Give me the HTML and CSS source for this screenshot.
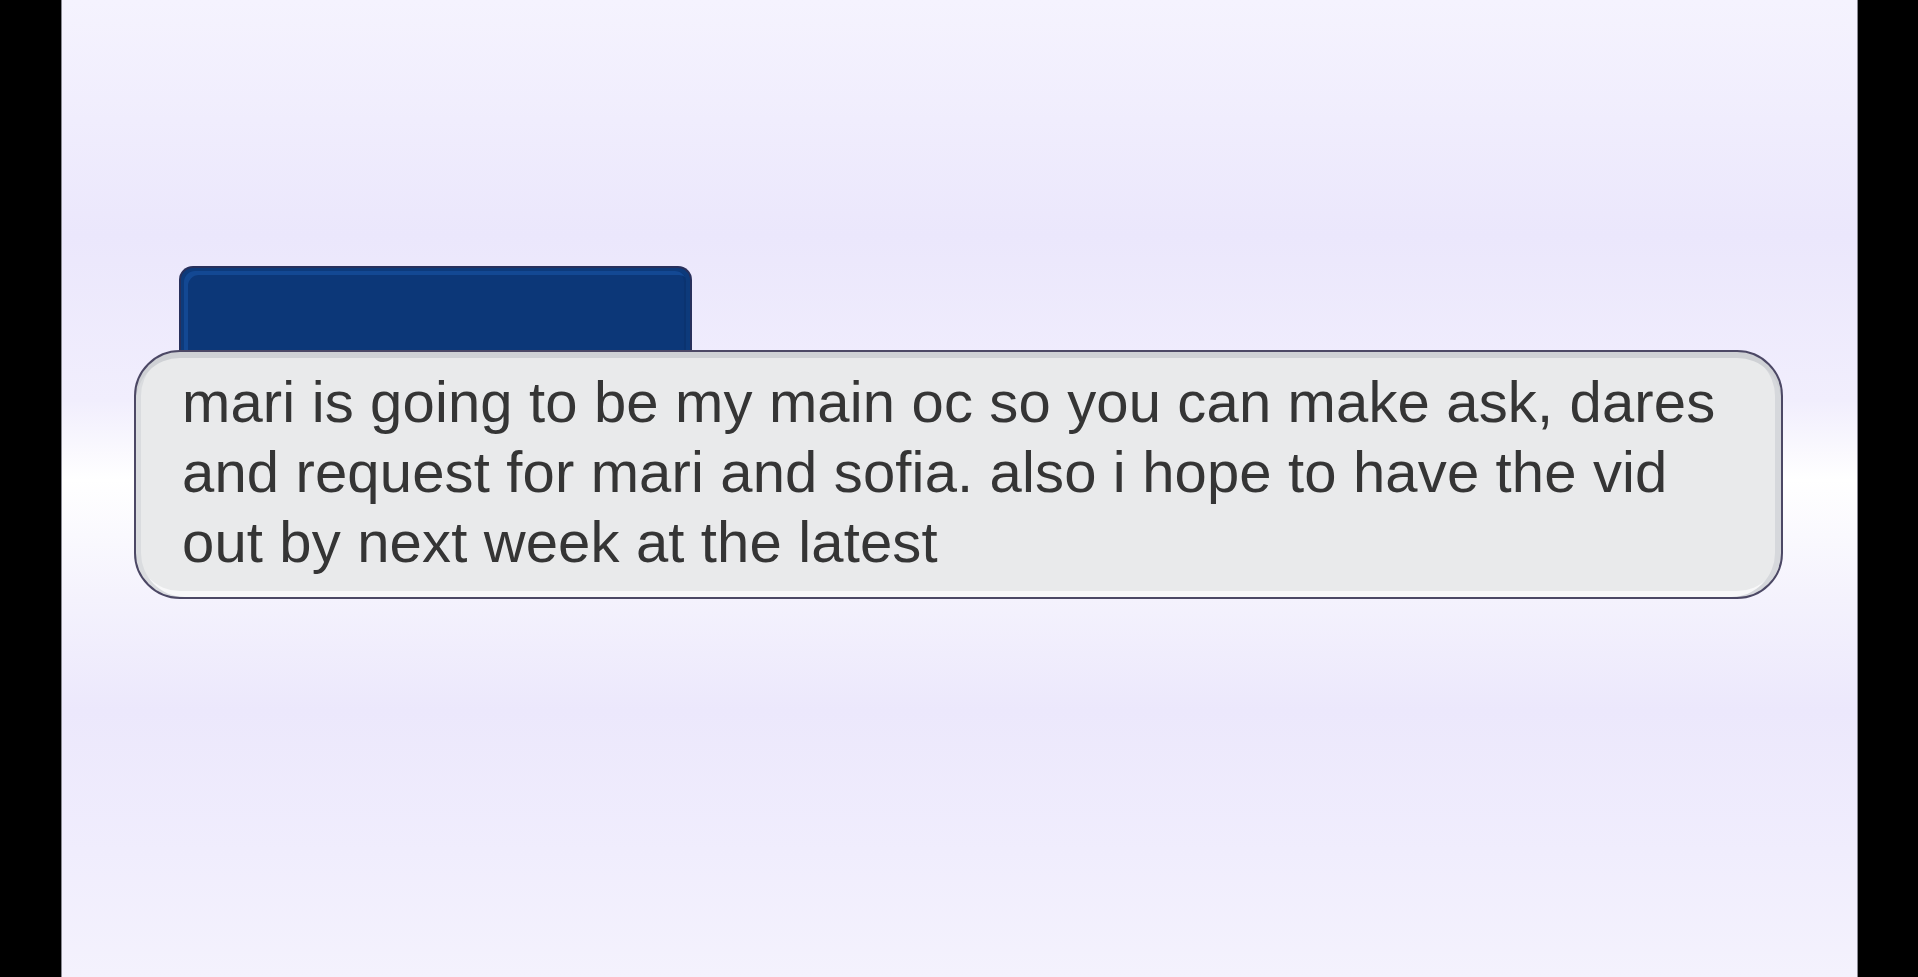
FILE: index.html
```html
<!DOCTYPE html>
<html>
<head>
<meta charset="utf-8">
<link rel="stylesheet" href="styles.css">
</head>
<body>
<div class="screen">
  <div class="bar"></div>
  <main class="stage">
    <div class="dialog">
      <div class="name-tab"><div class="name-inner"></div></div>
      <div class="text-box">
        <p class="line-text">mari is going to be my main oc so you can make ask, dares and request for mari and sofia. also i hope to have the vid out by next week at the latest</p>
      </div>
    </div>
  </main>
  <div class="bar"></div>
</div>
</body>
</html>
```
FILE: styles.css
```css
html, body {
  margin: 0;
  padding: 0;
  background: #000;
}
.screen {
  display: flex;
  width: 1918px;
  height: 977px;
  overflow: hidden;
}
.bar {
  flex: 0 0 61px;
  background: #000;
}
.bar:last-child {
  flex: 0 0 60px;
}
.stage {
  flex: 1 1 auto;
  border-left: 1px solid #8a8a92;
  border-right: 1px solid #8a8a92;
  background: linear-gradient(180deg,
    #f5f3fe 0px,
    #f0edfd 120px,
    #ebe7fc 235px,
    #f1eefd 400px,
    #ffffff 480px,
    #f4f2fd 600px,
    #ece8fc 710px,
    #f0edfd 850px,
    #f4f2fd 977px);
  padding: 266px 0 0 72px;
  box-sizing: border-box;
}
.dialog {
  display: flex;
  flex-direction: column;
  width: 1649px;
}
.name-tab {
  margin-left: 45px;
  width: 513px;
  height: 84px;
  box-sizing: border-box;
  border: 2px solid #28305c;
  border-bottom: none;
  border-radius: 14px 14px 0 0;
  background: #0d3a7b;
  padding: 3px 4px 0 3px;
}
.name-inner {
  height: 100%;
  border-radius: 11px 11px 0 0;
  background: #0c3778;
  box-shadow: inset 4px 4px 0 #134893, inset -2px 0 0 #0b3370;
}
.text-box {
  box-sizing: border-box;
  height: 249px;
  border: 2px solid #4c4865;
  border-radius: 46px;
  background: #e9eaeb;
  box-shadow:
    inset 0 6px 0 #cfd1d5,
    inset 5px 0 0 #dadcdf,
    inset -6px 0 0 #d6d8dc,
    inset 0 -6px 0 #f8f8f9;
  padding: 15px 40px 0 46px;
}
.line-text {
  margin: 0;
  font-family: "Liberation Sans", Arial, sans-serif;
  font-size: 58px;
  letter-spacing: 0.15px;
  line-height: 70px;
  color: #353535;
  width: 1555px;
}
```
